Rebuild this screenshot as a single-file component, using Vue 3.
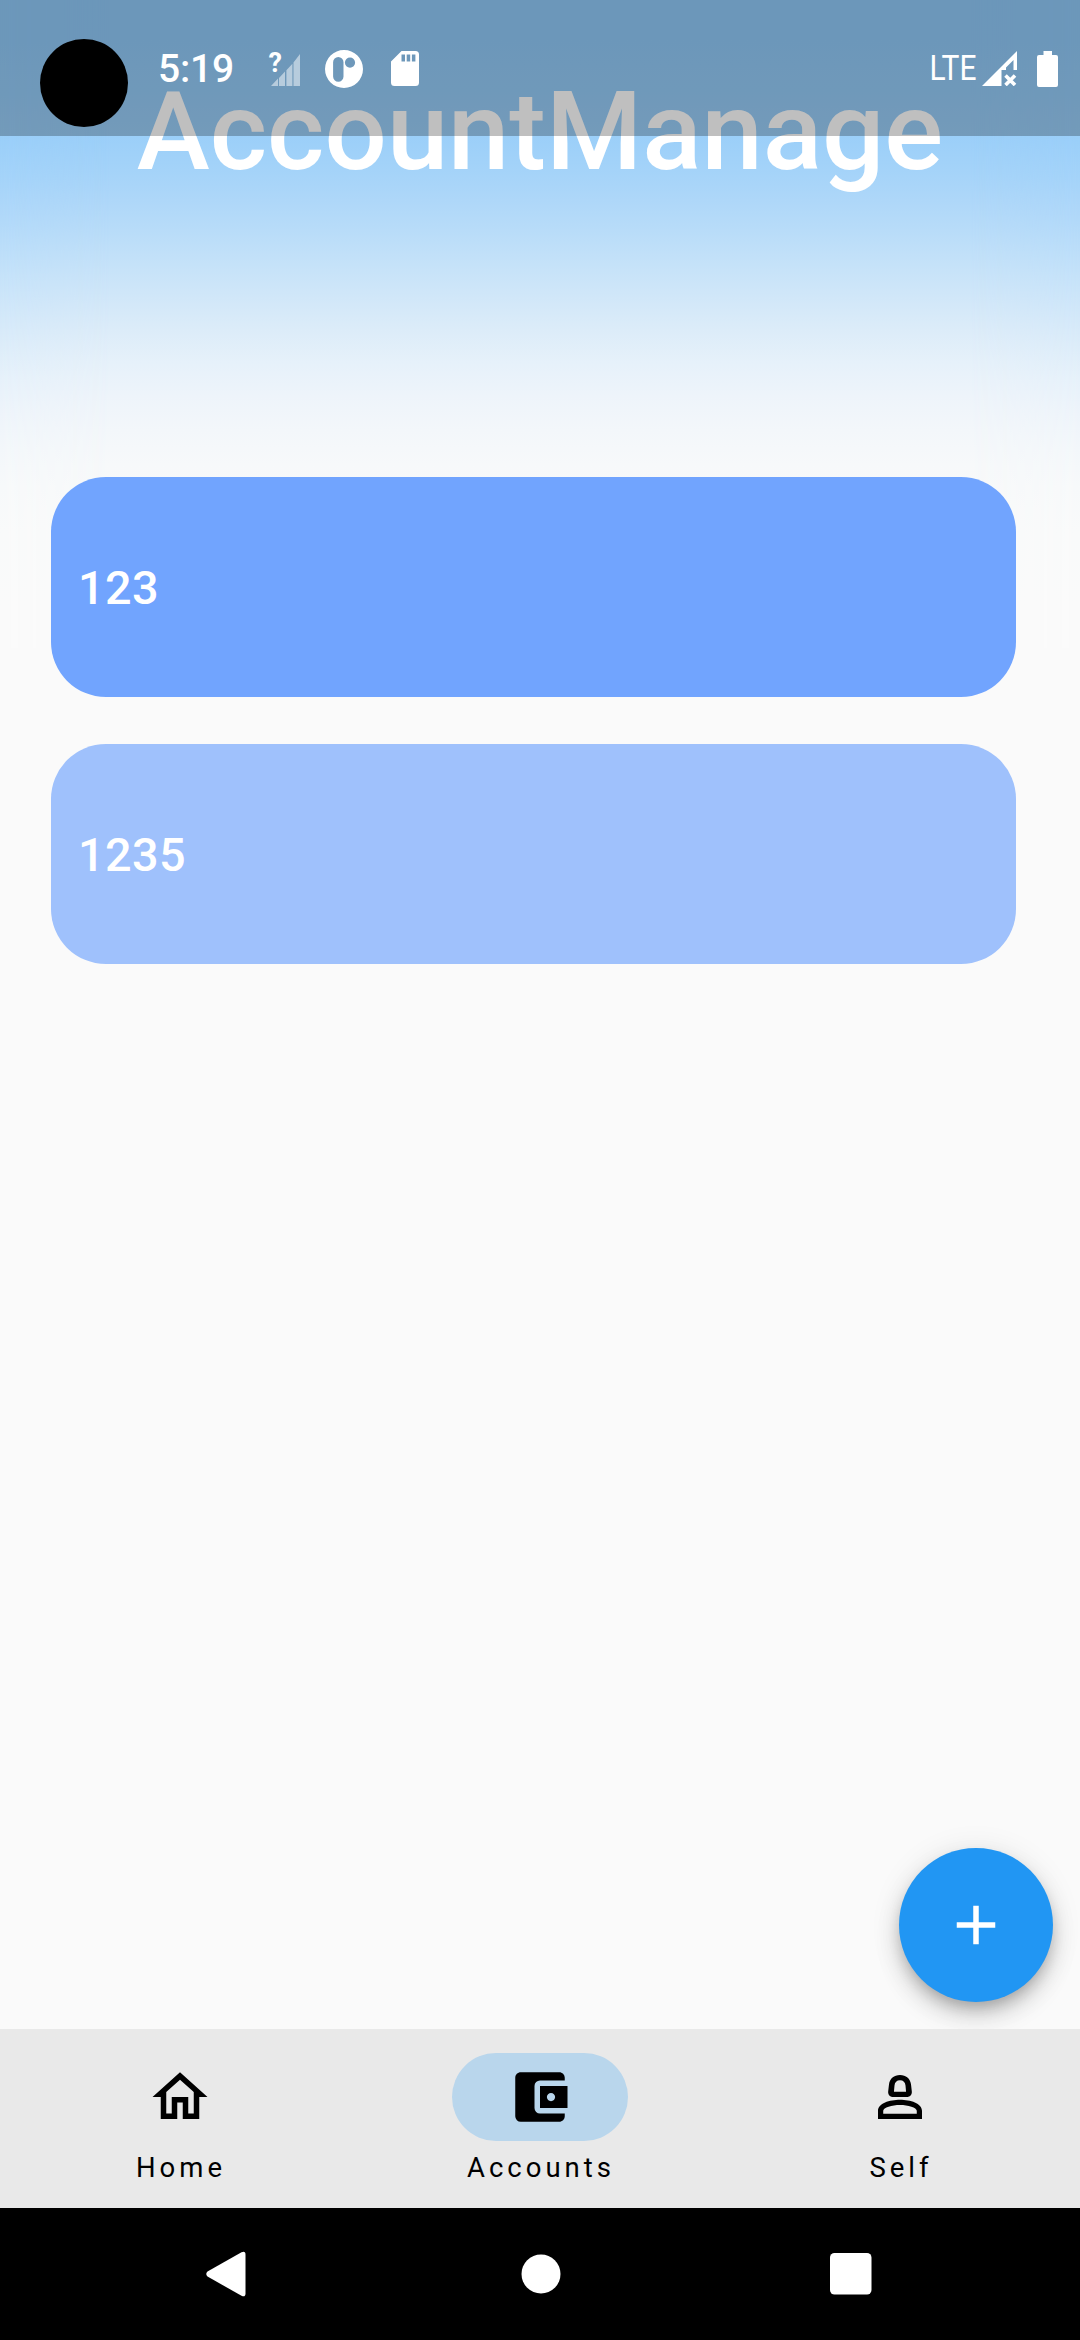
<script setup>
const accounts = [
  { name: '123', tone: 'strong' },
  { name: '1235', tone: 'soft' },
]

const tabs = [
  {
    label: 'Home',
    path: 'M12 5.69l5 4.5V18h-2v-6H9v6H7v-7.81l5-4.5M12 3L2 12h3v8h6v-6h2v6h6v-8h3L12 3z',
  },
  {
    label: 'Accounts',
    active: true,
    path: 'M21 18v1c0 1.1-.9 2-2 2H5a2 2 0 0 1-2-2V5c0-1.1.89-2 2-2h14c1.1 0 2 .9 2 2v1h-9a2 2 0 0 0-2 2v8a2 2 0 0 0 2 2h9zm-9-2h10V8H12v8zm4-2.5c-.83 0-1.5-.67-1.5-1.5s.67-1.5 1.5-1.5 1.5.67 1.5 1.5-.67 1.5-1.5 1.5z',
  },
  {
    label: 'Self',
    path: 'M12 4C9.8 4 8.3 5.3 8 7.4L7.7 10C7.6 11.2 8.4 12 9.5 12h5c1.1 0 1.9-.8 1.8-2L16 7.4C15.7 5.3 14.2 4 12 4zm0 1.9c1.2 0 1.9.7 2 1.9l.2 2.3H9.8L10 7.8c.1-1.2.8-1.9 2-1.9zM12 13c-3.8 0-8 1.3-8 4v3h16v-3c0-2.7-4.2-4-8-4zm0 1.9c2.9 0 6.1 1 6.1 2.1v1.1H5.9V17c0-1.1 3.2-2.1 6.1-2.1z',
  },
]
</script>

<template>
  <div class="screen">
    <main class="page">
      <div class="glow"></div>
      <div class="glow edges"></div>
      <h1 class="title">AccountManage</h1>
      <ul class="accounts">
        <li v-for="a in accounts" :key="a.name" class="account" :class="a.tone">{{ a.name }}</li>
      </ul>
      <button class="fab" aria-label="Add">
        <svg width="66" height="66" viewBox="0 0 24 24"><path fill="#fff" d="M19 13h-6v6h-2v-6H5v-2h6V5h2v6h6v2z" /></svg>
      </button>
    </main>

    <nav class="tabs">
      <div v-for="t in tabs" :key="t.label" class="tab">
        <div class="indicator" :class="{ active: t.active }">
          <svg width="66" height="66" viewBox="0 0 24 24"><path :d="t.path" /></svg>
        </div>
        <span class="label">{{ t.label }}</span>
      </div>
    </nav>

    <footer class="system-nav">
      <svg width="40" height="46" viewBox="0 0 40 46">
        <path fill="#fff" d="M1.5 20.5L35.5 1.2Q39.500-.5 39.500 3.500V42.500Q39.500 46.500 35.500 44.800L1.500 25.500Q-1 23 1.500 20.500z" />
      </svg>
      <svg class="sys-home" width="40" height="40" viewBox="0 0 40 40"><circle cx="20" cy="20" r="19.500" fill="#fff" /></svg>
      <svg width="42" height="42" viewBox="0 0 42 42"><rect width="41.500" height="41.500" rx="4.500" fill="#fff" /></svg>
    </footer>

    <div class="status-bar">
      <div class="camera"></div>
      <span class="clock">5:19</span>
      <svg class="ic-unknown" width="34" height="54" viewBox="0 -8 34 54">
        <path
          fill="#fff"
          fill-opacity=".5"
          d="M3 36l7-7.500V36zM11 28l6-6.500V36h-6zM18.400 20.200l6-6.500V36h-6zM25.500 12.500l6.500-8.500V36h-6.500z"
        />
        <text x="0.500" y="22" font-size="27" font-weight="700" fill="#fff">?</text>
      </svg>
      <svg class="ic-app" width="38" height="38" viewBox="0 0 38 38">
        <path
          fill="#fff"
          fill-rule="evenodd"
          d="M19 0a19 19 0 1 1 0 38a19 19 0 0 1 0-38zM13.300 7a5.200 5.200 0 0 0-5.200 5.200v14.300a5.200 5.200 0 0 0 10.400 0V12.200A5.200 5.200 0 0 0 13.300 7zM25 7.500a5.100 5.100 0 1 0 0 10.200a5.100 5.100 0 0 0 0-10.200z"
        />
      </svg>
      <svg class="ic-card" width="28" height="35" viewBox="0 0 28 35">
        <path
          fill="#fff"
          fill-rule="evenodd"
          d="M10.500 0H24.500A3.500 3.500 0 0 1 28 3.500v28a3.500 3.500 0 0 1-3.500 3.500h-21A3.500 3.500 0 0 1 0 31.500V10.500zM10.500 3.500v7h3.500v-7zM15.700 3.500v7h3.500v-7zM20.900 3.500v7h3.500v-7z"
        />
      </svg>
      <span class="spacer"></span>
      <svg class="network" width="50" height="44" viewBox="0 0 50 44">
        <text x="0.500" y="33" font-size="34.500" fill="#fff" textLength="47" lengthAdjust="spacingAndGlyphs">LTE</text>
      </svg>
      <svg class="ic-signal" width="35" height="35" viewBox="0 0 35 35">
        <path fill="#fff" fill-rule="evenodd" d="M0 35L35 0V19h-3.500V9L24 16.500V19h-4.500v16z" />
        <path d="M23.500 24.500l9.500 9.500M33 24.500l-9.500 9.500" stroke="#fff" stroke-width="3.600" />
      </svg>
      <svg class="ic-battery" width="21" height="36" viewBox="0 0 21 36">
        <path
          fill="#fff"
          d="M6.500 0h8.500v4h4a2 2 0 0 1 2 2v28a2 2 0 0 1-2 2H2a2 2 0 0 1-2-2V6a2 2 0 0 1 2-2h4.500z"
        />
      </svg>
    </div>
  </div>
</template>

<style>
body {
  margin: 0;
  background: #fafafa;
}
</style>

<style scoped>
.screen {
  position: relative;
  display: flex;
  flex-direction: column;
  width: 1080px;
  height: 2340px;
  overflow: hidden;
  background: #fafafa;
  font-family: Roboto, 'Noto Sans', sans-serif;
}
svg {
  display: block;
  flex: none;
}
.status-bar {
  position: absolute;
  z-index: 2;
  top: 0;
  left: 0;
  display: flex;
  align-items: center;
  box-sizing: border-box;
  width: 1080px;
  height: 136px;
  padding: 1px 22px 0 40px;
  background: rgba(0, 0, 0, 0.25);
  color: #fff;
}
.camera {
  width: 88px;
  height: 88px;
  margin: 28px 30px 0 0;
  border-radius: 50%;
  background: #000;
}
.clock {
  width: 110px;
  font-size: 39px;
  font-weight: 500;
  letter-spacing: -0.2px;
}
.ic-unknown {
  margin-right: 23px;
}
.ic-app {
  margin-right: 28px;
}
.spacer {
  flex: 1;
}
.network {
  margin-right: 3px;
}
.ic-signal {
  margin-right: 20px;
}
.page {
  position: relative;
  display: flex;
  flex-direction: column;
  height: 2029px;
  overflow: hidden;
}
.glow {
  position: absolute;
  inset: 0 0 auto;
  height: 620px;
  background: linear-gradient(
    #90caf9 0%,
    #91caf9 6.45%,
    #95ccf9 14.5%,
    #9bcff9 21.9%,
    #a4d3f9 27.4%,
    #aed7f9 32.3%,
    #b8dcf9 37.1%,
    #c5e2f9 42.7%,
    #d1e7f9 48.1%,
    #dcecf9 53.2%,
    #e6f1fa 58.5%,
    #eef4fa 64%,
    #f3f7fa 69.4%,
    #f7f9fa 75%,
    #f9fafa 82.3%,
    #fafafa 93.5%
  );
}
.glow.edges {
  height: 648px;
  mask-image: linear-gradient(90deg, #000, transparent 110px, transparent calc(100% - 110px), #000);
}
.title {
  position: relative;
  margin: 77px 0 0;
  text-align: center;
  font-size: 110px;
  font-weight: 500;
  line-height: 110px;
  color: #fff;
}
.accounts {
  position: relative;
  display: flex;
  flex-direction: column;
  gap: 47px;
  margin: 290px 64px 0 51px;
  padding: 0;
  list-style: none;
}
.account {
  display: flex;
  align-items: center;
  box-sizing: border-box;
  height: 220px;
  padding: 2px 27px 0;
  border-radius: 55px;
  font-size: 46.75px;
  font-weight: 500;
  letter-spacing: 0.41px;
  color: #fff;
}
.account.strong {
  background: #71a4fe;
}
.account.soft {
  background: #9fc1fc;
}
.fab {
  position: relative;
  display: flex;
  align-items: center;
  justify-content: center;
  align-self: flex-end;
  width: 154px;
  height: 154px;
  margin: auto 27.5px 27.5px 0;
  padding: 0;
  border: 0;
  border-radius: 50%;
  background: #2196f3;
  box-shadow:
    0 8px 14px -3px rgba(0, 0, 0, 0.2),
    0 14px 24px rgba(0, 0, 0, 0.15),
    0 3px 32px rgba(0, 0, 0, 0.09);
}
.tabs {
  display: flex;
  height: 179px;
  background: #e9e9e9;
}
.tab {
  display: flex;
  flex: 1;
  flex-direction: column;
  align-items: center;
  padding-top: 24px;
  color: #000;
}
.indicator {
  display: flex;
  align-items: center;
  justify-content: center;
  width: 176px;
  height: 88px;
  border-radius: 44px;
}
.indicator.active {
  background: #b9d6ec;
}
.label {
  margin-top: 11px;
  padding-left: 2px;
  font-size: 27.5px;
  line-height: 32px;
  letter-spacing: 4px;
}
.system-nav {
  display: flex;
  align-items: center;
  justify-content: space-between;
  box-sizing: border-box;
  height: 132px;
  padding: 0 208px 0 206px;
  background: #000;
}
.sys-home {
  margin-left: 5px;
}
</style>
